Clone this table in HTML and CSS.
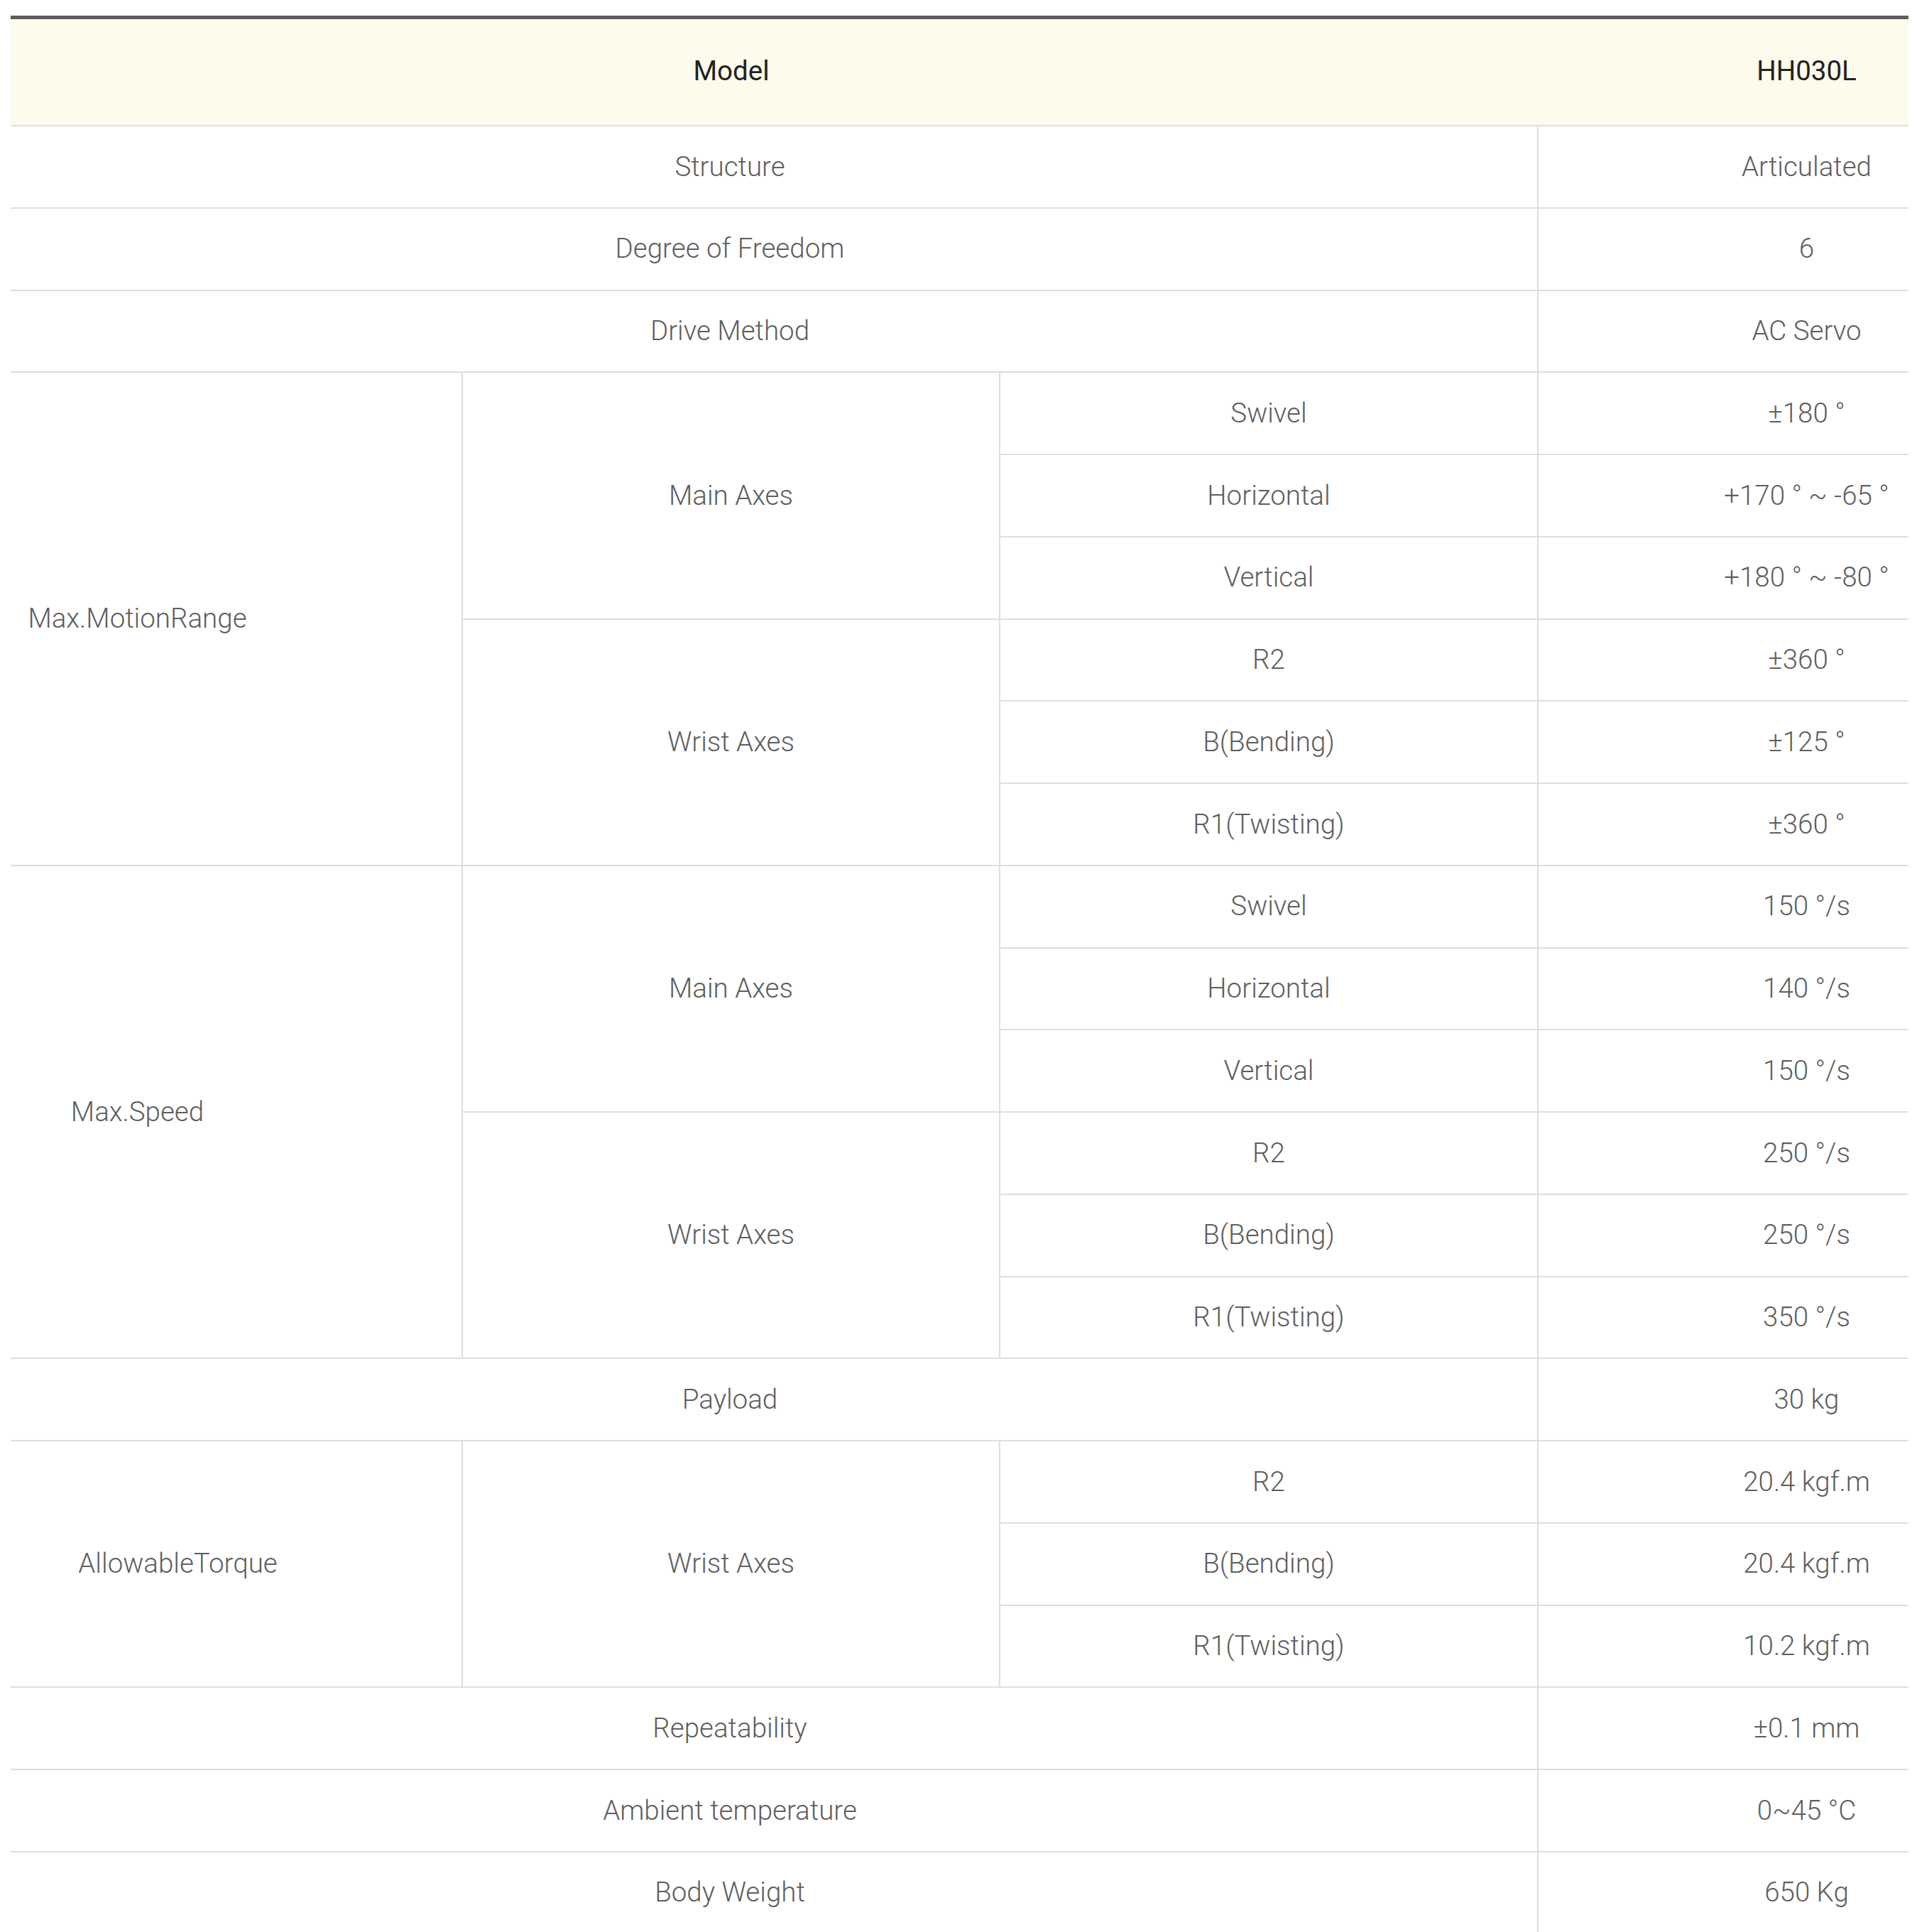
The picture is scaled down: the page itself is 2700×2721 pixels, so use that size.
FILE: index.html
```html
<!DOCTYPE html>
<html lang="en">
<head>
<meta charset="utf-8">
<title>HH030L Specification</title>
<link rel="stylesheet" href="styles.css">
</head>
<body>
<div class="spec">
  <div class="cell head head-label">Model</div>
  <div class="cell head value">HH030L</div>

  <div class="cell label">Structure</div>
  <div class="cell value">Articulated</div>

  <div class="cell label">Degree of Freedom</div>
  <div class="cell value">6</div>

  <div class="cell label">Drive Method</div>
  <div class="cell value">AC Servo</div>

  <div class="cell group span6">Max.MotionRange</div>
  <div class="cell sub span3">Main Axes</div>
  <div class="cell item">Swivel</div>
  <div class="cell value">±180 °</div>
  <div class="cell item">Horizontal</div>
  <div class="cell value">+170 ° ~ -65 °</div>
  <div class="cell item">Vertical</div>
  <div class="cell value">+180 ° ~ -80 °</div>
  <div class="cell sub span3">Wrist Axes</div>
  <div class="cell item">R2</div>
  <div class="cell value">±360 °</div>
  <div class="cell item">B(Bending)</div>
  <div class="cell value">±125 °</div>
  <div class="cell item">R1(Twisting)</div>
  <div class="cell value">±360 °</div>

  <div class="cell group span6">Max.Speed</div>
  <div class="cell sub span3">Main Axes</div>
  <div class="cell item">Swivel</div>
  <div class="cell value">150 °/s</div>
  <div class="cell item">Horizontal</div>
  <div class="cell value">140 °/s</div>
  <div class="cell item">Vertical</div>
  <div class="cell value">150 °/s</div>
  <div class="cell sub span3">Wrist Axes</div>
  <div class="cell item">R2</div>
  <div class="cell value">250 °/s</div>
  <div class="cell item">B(Bending)</div>
  <div class="cell value">250 °/s</div>
  <div class="cell item">R1(Twisting)</div>
  <div class="cell value">350 °/s</div>

  <div class="cell label">Payload</div>
  <div class="cell value">30 kg</div>

  <div class="cell group group-wide span3">AllowableTorque</div>
  <div class="cell sub span3">Wrist Axes</div>
  <div class="cell item">R2</div>
  <div class="cell value">20.4 kgf.m</div>
  <div class="cell item">B(Bending)</div>
  <div class="cell value">20.4 kgf.m</div>
  <div class="cell item">R1(Twisting)</div>
  <div class="cell value">10.2 kgf.m</div>

  <div class="cell label">Repeatability</div>
  <div class="cell value">±0.1 mm</div>

  <div class="cell label">Ambient temperature</div>
  <div class="cell value">0~45 °C</div>

  <div class="cell label">Body Weight</div>
  <div class="cell value">650 Kg</div>
</div>
</body>
</html>
```
FILE: styles.css
```css
html, body {
  margin: 0;
  padding: 0;
  background: #ffffff;
}

body {
  font-family: Roboto, "Noto Sans", "Liberation Sans", sans-serif;
}

.spec {
  margin: 22px 0 0 15px;
  width: 2673px;
  border-top: 5px solid #5b5b5b;
  display: grid;
  grid-template-columns: 637px 757px 758px 521px;
  grid-template-rows: 151px;
  grid-auto-rows: 115.75px;
}

.cell {
  box-sizing: border-box;
  display: flex;
  align-items: center;
  justify-content: center;
  border-bottom: 2px solid #dedede;
  font-size: 38.5px;
  font-weight: 300;
  color: #5e5e5e;
  white-space: nowrap;
  line-height: 1;
}

.head {
  background: #fdfbeb;
  color: #222222;
  font-weight: 400;
  padding-bottom: 3px;
}

.head-label {
  grid-column: span 3;
  padding-right: 122px;
}

.label {
  grid-column: span 3;
  padding-right: 124px;
  border-right: 2px solid #dedede;
}

.value {
  padding-left: 234px;
}

.group {
  border-right: 2px solid #dedede;
  padding-right: 278px;
}

.group-wide {
  padding-right: 164px;
}

.sub,
.item {
  border-right: 2px solid #dedede;
}

.span6 {
  grid-row: span 6;
}

.span3 {
  grid-row: span 3;
}
```
